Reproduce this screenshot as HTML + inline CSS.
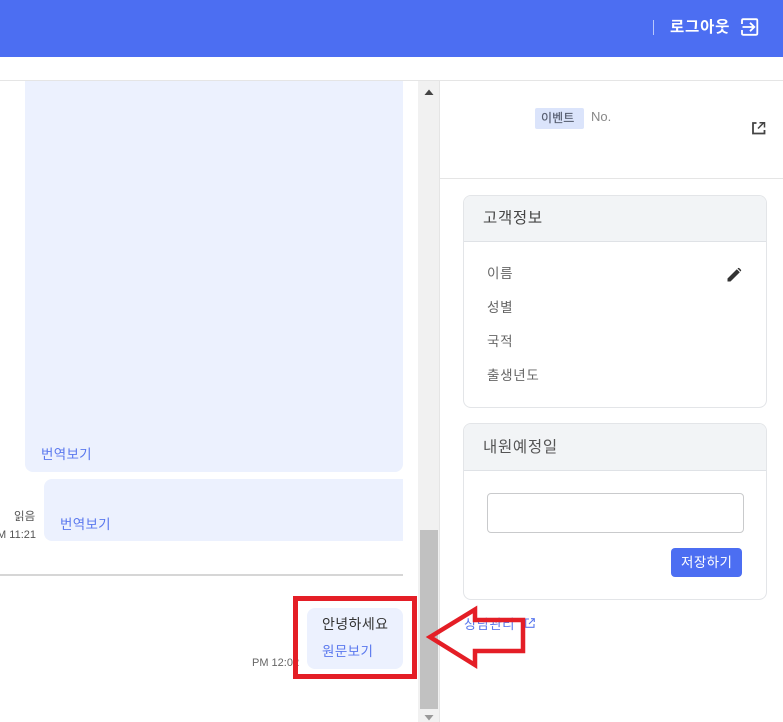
<!DOCTYPE html>
<html lang="ko">
<head>
<meta charset="utf-8">
<style>
html,body{margin:0;padding:0;background:#fff}
body{position:relative;width:783px;height:722px;overflow:hidden;font-family:"Liberation Sans","Noto Sans CJK KR",sans-serif;color:#555}
.a{position:absolute;white-space:nowrap}
.t{line-height:20px}
.bub{position:absolute;background:#ecf1fe;border-radius:8px}
.link{color:#5a78ee}
.card{position:absolute;left:463px;width:304px;border:1px solid #e3e5e8;border-radius:8px;background:#fff;overflow:hidden;box-sizing:border-box}
.hd{position:absolute;left:0;top:0;right:0;height:45px;background:#f2f4f6;border-bottom:1px solid #dfe2e6;box-sizing:content-box}
</style>
</head>
<body>
<div class="a" style="left:0;top:0;width:783px;height:57px;background:#4c6ef2"></div>
<div class="a" style="left:653px;top:20px;width:1px;height:15px;background:#b9c8fb"></div>
<div class="a t" style="left:670px;top:18px;font-size:15.500px;font-weight:bold;color:#fff;letter-spacing:.8px">로그아웃</div>
<svg class="a" style="left:740px;top:18px" width="20" height="18" viewBox="0 0 20 18" fill="none" stroke="#fff" stroke-width="1.800"><path d="M2 6V2.500C2 1.700 2.500 1.200 3.300 1.200H16C16.800 1.200 17.300 1.700 17.300 2.500V15.500C17.300 16.300 16.800 16.800 16 16.800H3.300C2.500 16.800 2 16.300 2 15.500V12"/><path d="M2.500 9H14.500M10 4.800L14.300 9L10 13.200"/></svg>

<div class="a" style="left:0;top:80px;width:783px;height:1px;background:#e5e5e5"></div>

<div class="bub" style="left:25px;top:81px;width:378px;height:391px;border-radius:0 0 8px 8px"></div>
<div class="a t link" style="left:41px;top:445px;font-size:13.500px;letter-spacing:.3px">번역보기</div>
<div class="bub" style="left:44px;top:479px;width:359px;height:62px;border-radius:8px 0 0 8px"></div>
<div class="a t link" style="left:60px;top:515px;font-size:13.500px;letter-spacing:.3px">번역보기</div>
<div class="a t" style="left:14px;top:507px;font-size:11.500px;color:#555">읽음</div>
<div class="a t" style="right:747px;top:525px;font-size:11px;color:#555">PM 11:21</div>
<div class="a" style="left:0;top:574px;width:403px;height:2px;background:#d6d6d6"></div>

<div class="bub" style="left:307px;top:608px;width:96px;height:61px"></div>
<div class="a t" style="left:322px;top:614px;font-size:14px;color:#333;letter-spacing:.4px">안녕하세요</div>
<div class="a t link" style="left:322px;top:642px;font-size:13.500px;letter-spacing:.4px">원문보기</div>
<div class="a t" style="left:252px;top:653px;font-size:11px;color:#666">PM 12:02</div>

<div class="a" style="left:418px;top:81px;width:21px;height:641px;background:#f1f1f1"></div>
<div class="a" style="left:439px;top:81px;width:1px;height:641px;background:#e5e5e5"></div>
<div class="a" style="left:420px;top:530px;width:18px;height:179px;background:#c1c1c1"></div>
<svg class="a" style="left:424px;top:88px" width="10" height="8"><path d="M.5 7L5 1.500L9.500 7Z" fill="#444"/></svg>
<svg class="a" style="left:424px;top:714px" width="10" height="8"><path d="M.5 1H9.500L5 6.500Z" fill="#999"/></svg>

<div class="a" style="left:535px;top:108px;width:49px;height:21px;background:#dbe4fb;border-radius:2px"></div>
<div class="a t" style="left:541px;top:108px;font-size:12px;color:#555c6e;letter-spacing:.1px;-webkit-text-stroke:.2px #555c6e">이벤트</div>
<div class="a t" style="left:591px;top:107px;font-size:13px;color:#888">No.</div>
<svg class="a" style="left:751px;top:121px" width="15" height="14" viewBox="0 0 15 14" fill="none" stroke="#444" stroke-width="1.800"><path d="M5.500 2H2V12.500H13.500V9"/><path d="M7 7.500L12.500 2M8.500 1.700H13.500V6.500" stroke-width="1.500"/></svg>
<div class="a" style="left:440px;top:178px;width:343px;height:1px;background:#e5e5e5"></div>

<div class="card" style="top:195px;height:213px"><div class="hd"></div></div>
<div class="a t" style="left:483px;top:209px;font-size:15.500px;color:#444;letter-spacing:.7px">고객정보</div>
<div class="a t" style="left:487px;top:264px;font-size:13.500px;color:#666;letter-spacing:.7px">이름</div>
<div class="a t" style="left:487px;top:298px;font-size:13.500px;color:#666;letter-spacing:.7px">성별</div>
<div class="a t" style="left:487px;top:332px;font-size:13.500px;color:#666;letter-spacing:.7px">국적</div>
<div class="a t" style="left:487px;top:366px;font-size:13.500px;color:#666;letter-spacing:.7px">출생년도</div>
<svg class="a" style="left:727px;top:267px" width="15" height="15" viewBox="0 0 15 15"><path d="M0.500 14.500V11.500L9.800 2.200L12.800 5.200L3.500 14.500Z M10.800 1.200C11.300 .7 11.900 .7 12.400 1.200L13.800 2.600C14.300 3.100 14.300 3.700 13.800 4.200L13.500 4.500L10.500 1.500Z" fill="#333"/></svg>

<div class="card" style="top:423px;height:177px"><div class="hd" style="height:46px"></div></div>
<div class="a t" style="left:483px;top:438px;font-size:15.500px;color:#555;letter-spacing:.7px">내원예정일</div>
<div class="a" style="left:487px;top:493px;width:257px;height:40px;box-sizing:border-box;border:1px solid #c9cacc;border-radius:4px;background:#fff"></div>
<div class="a" style="left:671px;top:548px;width:71px;height:29px;background:#4c6ef2;border-radius:4px"></div>
<div class="a t" style="left:681px;top:553px;font-size:13.500px;color:#fff;letter-spacing:.4px">저장하기</div>

<div class="a t link" style="left:464px;top:615px;font-size:13.500px;letter-spacing:.3px">상담관리</div>
<svg class="a" style="left:525px;top:618px" width="10" height="10" viewBox="0 0 10 10" fill="none" stroke="#5a78ee" stroke-width="1.100"><path d="M4 1H.700V9.300H9V6"/><path d="M4 6L9 1M6 .7H9.300V4"/></svg>

<div class="a" style="left:293px;top:596px;width:124px;height:83px;box-sizing:border-box;border:5px solid #e41e26"></div>
<svg class="a" style="left:420px;top:600px" width="112" height="76" viewBox="0 0 112 76"><path d="M10 37L55 9.500V20H103V51H55V65Z" fill="none" stroke="#e41e26" stroke-width="4.500" stroke-linejoin="miter"/></svg>
</body>
</html>
